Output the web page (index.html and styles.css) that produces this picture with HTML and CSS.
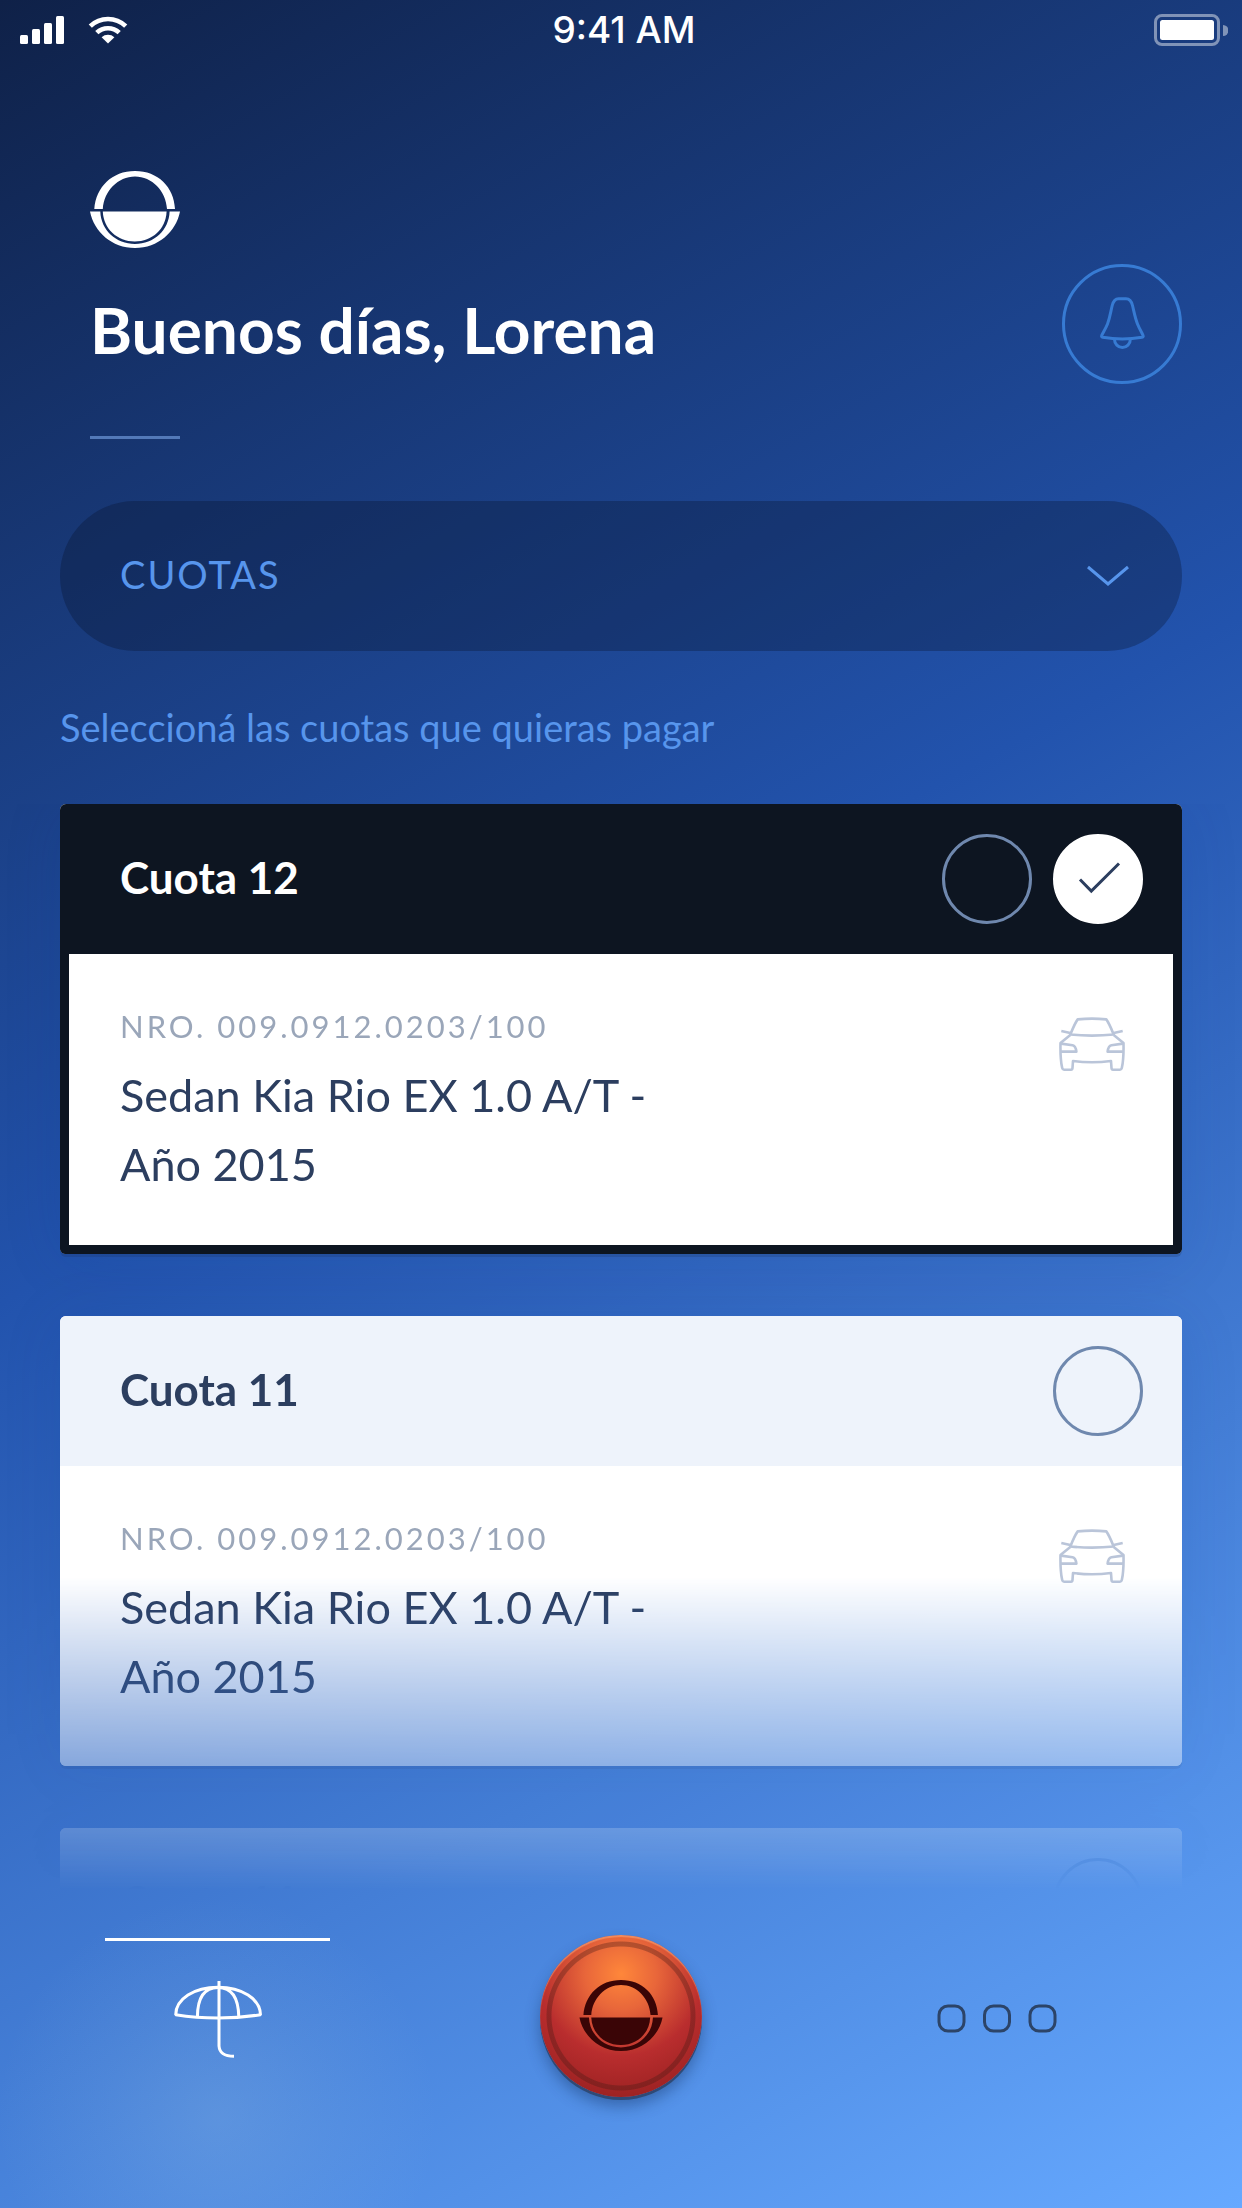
FILE: index.html
```html
<!DOCTYPE html>
<html lang="es">
<head>
<meta charset="utf-8">
<meta name="viewport" content="width=device-width, initial-scale=1">
<title>Cuotas</title>
<link rel="stylesheet" href="styles.css">
</head>
<body>
<svg class="defs" aria-hidden="true">
  <symbol id="logo" viewBox="0 0 90 78">
    <path d="M4.3 38C6 16 22 0 45 0S84 16 85 38H77C76 20 62 5.5 45 5.5S14 20 12.8 38Z"/>
    <path d="M0 40.5H10.3C11 59 26 73 45 73S79 59 79.6 40.5H90C86 61 68 77 45 77S4 61 0 40.5Z"/>
    <path d="M12.8 40.5H76.6C76 58 62 70.5 44.7 70.5S13.5 58 12.8 40.5Z"/>
  </symbol>
  <symbol id="car" viewBox="0 0 66 54">
    <g fill="none" stroke="currentColor" stroke-width="2.6" stroke-linejoin="round">
      <path d="M11.3 17.5C14 11 16 6 18.7 2.4Q33 .8 47.3 2.4C50 6 52 11 54.7 17.5Q33 19.8 11.3 17.5Z"/>
      <path d="M2.3 14 11.3 16M63.7 14 54.7 16"/>
      <path d="M11.3 18 1.5 26C1.3 35 1.5 44 3.2 51Q3.6 52.7 5 52.7H12Q13.4 52.7 13.5 51L14 44Q33 46.4 52 44L52.5 51Q52.6 52.7 54 52.7H61Q62.4 52.7 62.8 51C64.5 44 64.7 35 64.5 26L54.7 18"/>
      <path d="M2 26.6 13.6 28.2C16.6 28.8 17 31.5 17.4 34.6H2M64 26.6 52.4 28.2C49.4 28.8 49 31.5 48.6 34.6H64"/>
    </g>
  </symbol>
</svg>

<div class="app">
  <div class="status">
    <div class="status-signal">
      <svg width="44" height="30" viewBox="0 0 44 30" fill="#fff" aria-hidden="true">
        <rect y="20" width="8" height="9" rx="1.5"/><rect x="12" y="14" width="8" height="15" rx="1.5"/>
        <rect x="24" y="8" width="8" height="21" rx="1.5"/><rect x="36" y="1" width="8" height="28" rx="1.5"/>
      </svg>
      <svg width="40" height="30" viewBox="0 0 40 30" fill="none" stroke="#fff" stroke-width="4.6" aria-hidden="true">
        <path d="M2.3 11.2A25.5 25.5 0 0 1 37.7 11.2"/>
        <path d="M8.8 17.7A16.3 16.3 0 0 1 31.2 17.7"/>
        <path d="M20 28.5 13.6 22.2A9.5 9.5 0 0 1 26.4 22.2Z" fill="#fff" stroke="none"/>
      </svg>
    </div>
    <span class="status-time">9:41 AM</span>
    <svg class="status-battery" width="74" height="32" viewBox="0 0 74 32" aria-hidden="true">
      <rect x="1.5" y="1.5" width="63" height="29" rx="6.5" fill="none" stroke="#fff" stroke-opacity=".45" stroke-width="3"/>
      <rect x="6" y="6" width="54" height="20" rx="2.5" fill="#fff"/>
      <path d="M69 11a5.5 5.5 0 0 1 0 11Z" fill="#fff" fill-opacity=".45"/>
    </svg>
  </div>

  <header class="header">
    <svg class="logo" width="90" height="78" aria-hidden="true"><use href="#logo"/></svg>
    <div class="greeting">
      <h1>Buenos días, Lorena</h1>
      <button class="bell" type="button" aria-label="Notificaciones">
        <svg width="114" height="114" viewBox="3 3 114 114" fill="none" stroke="currentColor" stroke-width="3" stroke-linejoin="round" aria-hidden="true">
          <path d="M56.5 34.7H64C67.5 34.7 69.6 37.5 70.5 41.5C72.2 48.5 73 53.5 75.5 60C77.3 64.5 79.5 68 81 71.3Q81.8 73 80 73.3Q60.3 76.7 40.8 73.3Q39 73 39.8 71.3C41.5 68 43.7 64.5 45.5 60C48 53.5 48.5 48.5 50.2 41.5C51.2 37.5 53 34.7 56.5 34.7Z"/>
          <path d="M52.5 75.5A7.9 8 0 0 0 68.3 75.5"/>
        </svg>
      </button>
    </div>
    <div class="rule"></div>
  </header>

  <div class="filter">
    <select class="filter-select" aria-label="Sección">
      <option>CUOTAS</option>
    </select>
    <svg class="filter-arrow" width="42" height="22" viewBox="0 0 42 22" fill="none" stroke="currentColor" stroke-width="3" aria-hidden="true">
      <path d="M1 2 21 19 41 2"/>
    </svg>
  </div>

  <p class="hint">Seleccioná las cuotas que quieras pagar</p>

  <main class="list">
    <article class="card card-selected">
      <div class="card-head">
        <h2>Cuota 12</h2>
        <div class="checks">
          <label class="check"><input type="checkbox" aria-label="Marcar cuota 12"></label>
          <label class="check">
            <input type="checkbox" checked aria-label="Cuota 12 seleccionada">
            <svg width="90" height="90" viewBox="0 0 90 90" fill="none" stroke="#2c3e5f" stroke-width="3" aria-hidden="true"><path d="M27 45.5 38.3 57 66 29.5"/></svg>
          </label>
        </div>
      </div>
      <div class="card-body">
        <div class="policy">
          <p class="policy-number">NRO. 009.0912.0203/100</p>
          <p class="policy-name">Sedan Kia Rio EX 1.0 A/T - Año 2015</p>
        </div>
        <svg class="car" width="66" height="54" aria-hidden="true"><use href="#car"/></svg>
      </div>
    </article>

    <article class="card">
      <div class="card-head">
        <h2>Cuota 11</h2>
        <div class="checks">
          <label class="check"><input type="checkbox" aria-label="Marcar cuota 11"></label>
        </div>
      </div>
      <div class="card-body">
        <div class="policy">
          <p class="policy-number">NRO. 009.0912.0203/100</p>
          <p class="policy-name">Sedan Kia Rio EX 1.0 A/T - Año 2015</p>
        </div>
        <svg class="car" width="66" height="54" aria-hidden="true"><use href="#car"/></svg>
      </div>
    </article>

    <article class="card">
      <div class="card-head">
        <h2>Cuota 11</h2>
        <div class="checks">
          <label class="check"><input type="checkbox" aria-label="Marcar cuota siguiente"></label>
        </div>
      </div>
    </article>
  </main>

  <nav class="tabs">
    <a class="tab tab-active" href="#seguros" aria-label="Seguros">
      <svg width="88" height="78" viewBox="0 0 88 78" fill="none" stroke="#fff" stroke-width="3" aria-hidden="true">
        <path d="M1.7 34.7C2 19 20 7.3 44 7.3S86 19 86.5 34.7Q66 38 44 38T1.7 34.7Z" stroke-linejoin="bevel"/>
        <path d="M23.4 37C23.5 19 29 7.5 44 7.5S64.5 19 64.8 37"/>
        <path d="M45 1V66C45.5 73 51 76.3 60 76.3"/>
      </svg>
    </a>
    <button class="home" type="button" aria-label="Inicio">
      <svg width="84" height="72" aria-hidden="true"><use href="#logo"/></svg>
    </button>
    <a class="tab" href="#mas" aria-label="Más">
      <svg width="120" height="30" viewBox="0 0 120 30" fill="none" stroke="#2c4468" stroke-width="3" aria-hidden="true">
        <rect x="2" y="2" width="25" height="25" rx="9"/><rect x="47.500" y="2" width="25" height="25" rx="9"/><rect x="93" y="2" width="25" height="25" rx="9"/>
      </svg>
    </a>
  </nav>
</div>
</body>
</html>
```
FILE: styles.css
```css
* {
  box-sizing: border-box;
}

body,
h1,
h2,
p {
  margin: 0;
}

body {
  font-family: Lato, sans-serif;
  color: #fff;
}

.defs {
  display: none;
}

.app {
  display: flex;
  flex-direction: column;
  height: 100vh;
  background: linear-gradient(151deg, #0f2148 0%, #2253ad 45%, #66a9ff 100%);
}

/* Status bar */
.status {
  display: grid;
  grid-template-columns: 1fr auto 1fr;
  align-items: center;
  height: 60px;
  padding: 0 14px 0 20px;
}

.status-signal {
  display: flex;
  gap: 24px;
}

.status-time {
  font: 500 37px/40px Inter, sans-serif;
}

.status-battery {
  justify-self: end;
}

/* Greeting */
.header {
  padding: 111px 60px 0 90px;
}

.logo {
  display: block;
  margin-bottom: 15px;
  fill: #fff;
}

.greeting {
  display: flex;
  align-items: center;
  justify-content: space-between;
}

h1 {
  padding-top: 12px;
  font-size: 64px;
  line-height: 76px;
  font-weight: 700;
}

.bell {
  width: 120px;
  height: 120px;
  padding: 0;
  border: 3px solid #377bd3;
  border-radius: 50%;
  background: none;
  color: #377bd3;
}

.bell svg {
  display: block;
}

.rule {
  width: 90px;
  height: 3px;
  margin-top: 52px;
  background: #5379b8;
}

/* Section selector */
.filter {
  position: relative;
  margin: 62px 60px 0;
  color: #5795ec;
}

.filter-select {
  display: block;
  width: 100%;
  height: 150px;
  padding: 0 60px 4px;
  border: 0;
  border-radius: 75px;
  appearance: none;
  background: rgba(8, 18, 40, 0.3);
  color: inherit;
  font: 400 38px/48px Lato, sans-serif;
  letter-spacing: 2px;
}

.filter-arrow {
  position: absolute;
  top: 64px;
  right: 53px;
  pointer-events: none;
}

.hint {
  margin: 52px 60px 53px;
  color: #5795ec;
  font-size: 38px;
  line-height: 48px;
}

/* Instalments */
.list {
  display: flex;
  flex: 1;
  flex-direction: column;
  gap: 62px;
  min-height: 0;
  padding: 0 60px;
  overflow: hidden;
  mask-image: linear-gradient(to bottom, #000 calc(100% - 313px), transparent 100%);
}

.card {
  flex: none;
  border-radius: 6px;
  background: #fff;
  box-shadow: 0 3px 0 rgba(26, 50, 100, 0.25), 0 6px 60px rgba(20, 60, 150, 0.12);
  color: #2c3e5f;
  overflow: hidden;
}

.card-head {
  display: flex;
  align-items: center;
  justify-content: space-between;
  height: 150px;
  padding: 0 39px 0 60px;
  background: #eef3fb;
}

h2 {
  padding-bottom: 4px;
  font-size: 44px;
  line-height: 56px;
  font-weight: 700;
}

.checks {
  display: flex;
  gap: 21px;
}

.check {
  display: grid;
}

.check input,
.check svg {
  grid-area: 1 / 1;
}

.check svg {
  pointer-events: none;
}

.check input {
  width: 90px;
  height: 90px;
  margin: 0;
  border: 3px solid #6f88ae;
  border-radius: 50%;
  appearance: none;
}

.check input:checked {
  border-color: #fff;
  background: #fff;
}

.card-body {
  display: flex;
  justify-content: space-between;
  padding: 48px 48px 46px 51px;
  border: 9px solid #fff;
  border-top: 0;
}

.card-selected .card-head {
  background: #0d1521;
  color: #fff;
}

.card-selected .card-body {
  border-color: #0d1521;
}

.policy {
  max-width: 560px;
}

.policy-number {
  margin-bottom: 11px;
  color: #9aa6b9;
  font-size: 31px;
  line-height: 48px;
  letter-spacing: 3px;
}

.policy-name {
  font-size: 45px;
  line-height: 69px;
}

.car {
  margin-top: 15px;
  color: #bac5d9;
}

/* Tab bar */
.tabs {
  display: flex;
  flex: none;
  align-items: center;
  justify-content: space-between;
  padding: 45px 161px 111px 105px;
  background: radial-gradient(circle 220px at 217px 227px, rgba(150, 190, 225, 0.24), rgba(150, 190, 225, 0.11) 50%, transparent);
}

.tab {
  display: flex;
  justify-content: center;
  width: 169px;
  padding-top: 6px;
}

.tab-active {
  width: 225px;
  height: 156px;
  padding-top: 39px;
  border-top: 3px solid #fff;
}

.home {
  display: grid;
  place-items: center;
  width: 162px;
  height: 162px;
  padding: 0;
  border: 0;
  border-radius: 50%;
  background:
    radial-gradient(circle, transparent 69px, rgba(70, 25, 20, 0.34) 70px, rgba(70, 25, 20, 0.34) 74px, transparent 75px),
    radial-gradient(circle at 50% 24%, #ff873a 0, #e8663a 36px, #b92d2e 82px, #9c2222 125px);
  box-shadow: inset 0 2px 1px rgba(255, 180, 130, 0.5), 0 3px 0 #2f4a76, 0 9px 15px rgba(20, 50, 100, 0.45);
}

.home svg {
  fill: #3a0506;
}
```
